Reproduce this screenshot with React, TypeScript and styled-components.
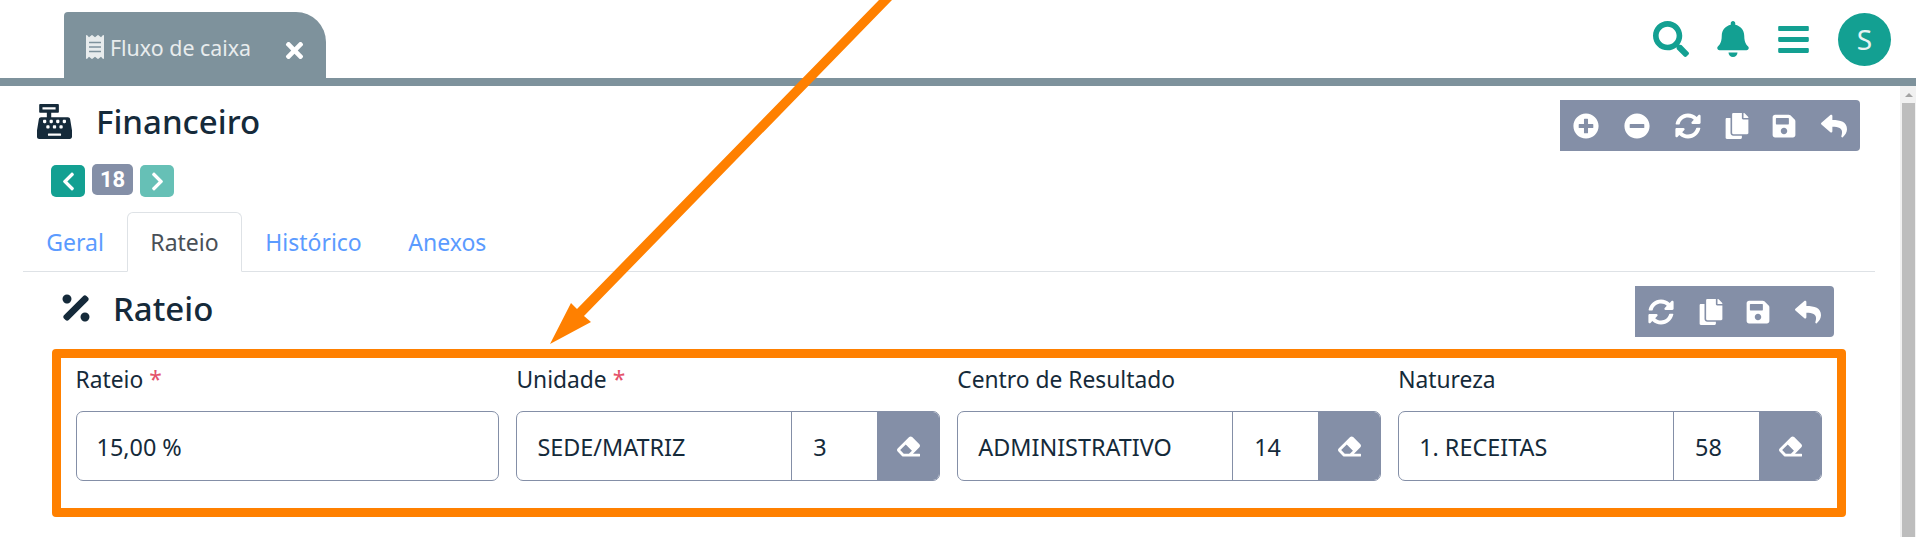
import React from "react";
import styled, { createGlobalStyle } from "styled-components";
import {
  FaReceipt, FaTimes, FaCashRegister, FaChevronLeft, FaChevronRight, FaSearch, FaBell, FaBars,
  FaPlusCircle, FaMinusCircle, FaSyncAlt, FaCopy, FaSave, FaReply, FaPercentage, FaEraser,
} from "react-icons/fa";

const Global = createGlobalStyle`
  html, body { margin: 0; padding: 0; background: #fff; }
  body { font-family: "Noto Sans", "Open Sans", sans-serif; color: #152a3a; overflow: hidden; }
  #root { width: 1916px; height: 537px; }
  * { box-sizing: border-box; }
`;

const Page = styled.div`
  position: relative;
  width: 1916px;
  height: 537px;
  overflow: hidden;
  display: flex;
  flex-direction: column;
`;

const TopBar = styled.header`
  height: 86px;
  flex: none;
  border-bottom: 8px solid #7e929c;
  display: flex;
  align-items: flex-end;
  justify-content: space-between;
  padding-left: 64px;
  padding-right: 25px;
`;

const AppTab = styled.div`
  width: 262px;
  height: 66px;
  background: #7e929c;
  border-radius: 4px 30px 0 0;
  color: #e8eced;
  display: flex;
  align-items: center;
  padding: 4px 19px 0 19px;
  font-size: 21.4px;
  svg { flex: none; }
`;

const AppTabLabel = styled.span`
  margin-left: 3px;
  white-space: nowrap;
`;

const AppTabClose = styled.span`
  margin-left: auto;
  margin-top: 7px;
  color: #fff;
  display: flex;
`;

const TopActions = styled.div`
  display: flex;
  align-items: center;
  height: 78px;
  color: #13a092;
`;

const TopIcon = styled.span<{ $gap: number }>`
  display: flex;
  margin-right: ${(p) => p.$gap}px;
`;

const Avatar = styled.div`
  width: 53px;
  height: 53px;
  border-radius: 50%;
  background: #13a092;
  color: #e8f4f3;
  display: flex;
  align-items: center;
  justify-content: center;
  font-size: 28px;
`;

const Body = styled.div`
  flex: 1;
  display: flex;
  min-height: 0;
`;

const Content = styled.main`
  flex: 1;
  min-width: 0;
  display: flex;
  flex-direction: column;
`;

const Scrollbar = styled.div`
  width: 16px;
  flex: none;
  background: #f1f1f1;
  padding: 0 1px 0 2px;
  display: flex;
  flex-direction: column;
  align-items: center;
`;

const ScrollArrow = styled.div`
  flex: none;
  width: 0;
  height: 0;
  margin: 7px 0 6px;
  border-left: 4px solid transparent;
  border-right: 4px solid transparent;
  border-bottom: 4px solid #a3a3a3;
`;

const ScrollThumb = styled.div`
  flex: 1;
  width: 100%;
  background: #bdbdbd;
`;

const PageHeader = styled.div`
  height: 65px;
  flex: none;
  padding: 14px 40px 0 37px;
  display: flex;
  justify-content: space-between;
  align-items: flex-start;
`;

const Heading = styled.div<{ $gap: number }>`
  display: flex;
  align-items: center;
  gap: ${(p) => p.$gap}px;
  font-size: 33px;
  font-weight: 500;
  line-height: 1;
  margin-top: 4px;
`;

const Toolbar = styled.div`
  height: 51px;
  background: #848fa7;
  border-radius: 0 4px 4px 0;
  display: flex;
  align-items: center;
  color: #fff;
`;

const ToolIcon = styled.span<{ $w: number }>`
  width: ${(p) => p.$w}px;
  display: flex;
  justify-content: center;
`;

const Pager = styled.div`
  height: 48px;
  flex: none;
  padding: 14px 0 0 51px;
  display: flex;
  align-items: flex-start;
  gap: 7px;
`;

const PagerButton = styled.div<{ $light?: boolean }>`
  width: 34px;
  height: 32px;
  background: ${(p) => (p.$light ? "#66c0b6" : "#13a092")};
  border-radius: 5px;
  color: #fff;
  display: flex;
  align-items: center;
  justify-content: center;
`;

const PagerCount = styled.div`
  width: 41px;
  height: 31px;
  margin-top: -1px;
  background: #848fa7;
  border-radius: 5px;
  color: #fff;
  display: flex;
  align-items: center;
  justify-content: center;
  font-family: Roboto, sans-serif;
  font-weight: 700;
  font-size: 22px;
`;

const Tabs = styled.nav`
  height: 60px;
  flex: none;
  margin: 13px 25px 0 23px;
  border-bottom: 1px solid #dee2e6;
  display: flex;
`;

const TabLink = styled.div<{ $active?: boolean }>`
  height: 60px;
  padding: 0 22.25px;
  display: flex;
  align-items: center;
  font-size: 23px;
  color: ${(p) => (p.$active ? "#495057" : "#5b9bff")};
  border: 1px solid ${(p) => (p.$active ? "#dee2e6" : "transparent")};
  border-bottom-color: ${(p) => (p.$active ? "#fff" : "transparent")};
  border-radius: 6px 6px 0 0;
  background: ${(p) => (p.$active ? "#fff" : "transparent")};
`;

const SectionHeader = styled.div`
  height: 77px;
  flex: none;
  padding: 14px 66px 0 58px;
  display: flex;
  justify-content: space-between;
  align-items: flex-start;
`;

const FormBox = styled.section`
  height: 168px;
  flex: none;
  margin: 0 54px 0 52px;
  border: 9px solid #ff8000;
  border-radius: 4px;
  padding: 0 15px 0 14.5px;
  display: grid;
  grid-template-columns: repeat(4, 1fr);
  column-gap: 17px;
`;

const Field = styled.div`
  display: flex;
  flex-direction: column;
`;

const Label = styled.label`
  height: 53px;
  padding-top: 7px;
  font-size: 22.8px;
  line-height: 30px;
`;

const Required = styled.span`
  color: #e4526a;
`;

const InputGroup = styled.div`
  height: 70px;
  display: flex;
  border: 1px solid #848fa7;
  border-radius: 7px;
  overflow: hidden;
  font-size: 23.4px;
`;

const TextCell = styled.div`
  flex: 1;
  min-width: 0;
  padding: 1px 0 0 20px;
  display: flex;
  align-items: center;
`;

const CodeCell = styled.div`
  width: 86px;
  flex: none;
  border-left: 1px solid #848fa7;
  padding: 1px 0 0 21px;
  display: flex;
  align-items: center;
`;

const ClearButton = styled.div`
  width: 62px;
  flex: none;
  background: #848fa7;
  color: #fff;
  display: flex;
  align-items: center;
  justify-content: center;
`;

const ArrowOverlay = styled.svg`
  position: absolute;
  left: 0;
  top: 0;
  pointer-events: none;
`;

const fields = [
  { label: "Unidade", required: true, text: "SEDE/MATRIZ", code: "3" },
  { label: "Centro de Resultado", required: false, text: "ADMINISTRATIVO", code: "14" },
  { label: "Natureza", required: false, text: "1. RECEITAS", code: "58" },
];

export default function App() {
  return (
    <Page>
      <Global />
      <TopBar>
        <AppTab>
          <FaReceipt size={24} />
          <AppTabLabel>Fluxo de caixa</AppTabLabel>
          <AppTabClose><FaTimes size={25} /></AppTabClose>
        </AppTab>
        <TopActions>
          <TopIcon $gap={26}><FaSearch size={36} /></TopIcon>
          <TopIcon $gap={25}><FaBell size={36} /></TopIcon>
          <TopIcon $gap={27}><FaBars size={35} /></TopIcon>
          <Avatar>S</Avatar>
        </TopActions>
      </TopBar>
      <Body>
        <Content>
          <PageHeader>
            <Heading $gap={24}>
              <FaCashRegister size={35} />
              Financeiro
            </Heading>
            <Toolbar>
              <ToolIcon $w={51}><FaPlusCircle size={26} /></ToolIcon>
              <ToolIcon $w={51}><FaMinusCircle size={26} /></ToolIcon>
              <ToolIcon $w={51}><FaSyncAlt size={26} /></ToolIcon>
              <ToolIcon $w={47}><FaCopy size={26} /></ToolIcon>
              <ToolIcon $w={47}><FaSave size={26} /></ToolIcon>
              <ToolIcon $w={53}><FaReply size={26} /></ToolIcon>
            </Toolbar>
          </PageHeader>
          <Pager>
            <PagerButton><FaChevronLeft size={21} /></PagerButton>
            <PagerCount>18</PagerCount>
            <PagerButton $light><FaChevronRight size={21} /></PagerButton>
          </Pager>
          <Tabs>
            <TabLink>Geral</TabLink>
            <TabLink $active>Rateio</TabLink>
            <TabLink>Histórico</TabLink>
            <TabLink>Anexos</TabLink>
          </Tabs>
          <SectionHeader>
            <Heading $gap={19}>
              <FaPercentage size={36} />
              Rateio
            </Heading>
            <Toolbar>
              <ToolIcon $w={52}><FaSyncAlt size={26} /></ToolIcon>
              <ToolIcon $w={48}><FaCopy size={26} /></ToolIcon>
              <ToolIcon $w={46}><FaSave size={26} /></ToolIcon>
              <ToolIcon $w={53}><FaReply size={26} /></ToolIcon>
            </Toolbar>
          </SectionHeader>
          <FormBox>
            <Field>
              <Label>Rateio <Required>*</Required></Label>
              <InputGroup><TextCell>15,00 %</TextCell></InputGroup>
            </Field>
            {fields.map((f) => (
              <Field key={f.label}>
                <Label>{f.label}{f.required && <> <Required>*</Required></>}</Label>
                <InputGroup>
                  <TextCell>{f.text}</TextCell>
                  <CodeCell>{f.code}</CodeCell>
                  <ClearButton><FaEraser size={23} /></ClearButton>
                </InputGroup>
              </Field>
            ))}
          </FormBox>
        </Content>
        <Scrollbar>
          <ScrollArrow />
          <ScrollThumb />
        </Scrollbar>
      </Body>
      <ArrowOverlay width={1916} height={537} viewBox="0 0 1916 537">
        <path fill="#ff8000" d="M879 0 L892 0 L584 316 L591 322 L550 344 L571 303 L577 309 Z" />
      </ArrowOverlay>
    </Page>
  );
}
